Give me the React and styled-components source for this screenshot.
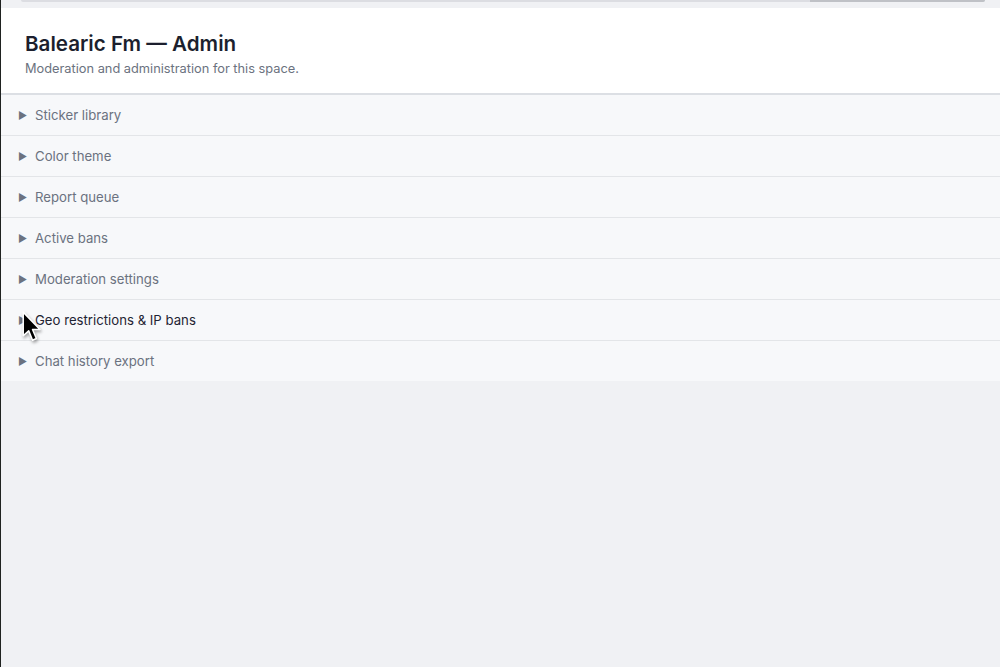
import React from "react";
import styled, { createGlobalStyle } from "styled-components";

const GlobalStyle = createGlobalStyle`
  html, body {
    margin: 0;
    padding: 0;
    background: #f0f1f4;
    font-family: Inter, "Noto Sans", "Liberation Sans", sans-serif;
  }
`;

const Page = styled.div`
  min-height: 667px;
  border-left: 1px solid #1f2220;
  background: #f0f1f4;
  position: relative;
`;

const TopStrip = styled.div`
  height: 8px;
  padding: 0 15px 0 20px;
  box-sizing: border-box;
`;

const TopEdge = styled.div`
  height: 2px;
  display: flex;
  border-radius: 0 0 3px 3px;
  background: #dcdde2;
  overflow: hidden;
`;

const TopThumb = styled.div`
  margin-left: auto;
  width: 175px;
  background: #bfc1c6;
`;

const Header = styled.header`
  background: #fff;
  padding: 23px 24px 15px;
  border-bottom: 2px solid #dcdfe4;
`;

const Title = styled.h1`
  margin: 0;
  font-size: 20.6px;
  font-weight: 600;
  line-height: 26px;
  color: #1c1f2e;
`;

const Subtitle = styled.p`
  margin: 3px 0 0;
  font-size: 12.8px;
  line-height: 18px;
  color: #6b7280;
`;

const List = styled.div`
  background: #f7f8fa;
`;

const Row = styled.div`
  height: 40px;
  display: flex;
  align-items: center;
  padding-left: 17px;
  font-size: 13.2px;
  color: ${(p) => (p.$hover ? "#1f2433" : "#6b7280")};
  border-bottom: 1px solid #e3e5e8;
  &:last-child {
    border-bottom: none;
  }
`;

const Arrow = styled.span`
  width: 17px;
  font-size: 10px;
  color: #6b7280;
`;

const Cursor = styled.svg`
  position: absolute;
  left: 20px;
  top: 311px;
  width: 22px;
  height: 32px;
  filter: drop-shadow(1px 2px 1.5px rgba(0, 0, 0, 0.35));
`;

const sections = [
  "Sticker library",
  "Color theme",
  "Report queue",
  "Active bans",
  "Moderation settings",
  "Geo restrictions & IP bans",
  "Chat history export",
];

export default function App() {
  return (
    <>
      <GlobalStyle />
      <Page>
        <TopStrip>
          <TopEdge>
            <TopThumb />
          </TopEdge>
        </TopStrip>
        <Header>
          <Title>Balearic Fm — Admin</Title>
          <Subtitle>Moderation and administration for this space.</Subtitle>
        </Header>
        <List>
          {sections.map((s) => (
            <Row key={s} $hover={s.startsWith("Geo")}>
              <Arrow>▶</Arrow>
              {s}
            </Row>
          ))}
        </List>
        <Cursor viewBox="0 0 20 29">
          <path
            d="M2 1 L2 22.5 L7 18 L10.5 26.5 L14 25 L10.5 16.8 L17.2 16.8 Z"
            fill="#000"
            stroke="#fff"
            strokeWidth="1.4"
            strokeLinejoin="round"
          />
        </Cursor>
      </Page>
    </>
  );
}
